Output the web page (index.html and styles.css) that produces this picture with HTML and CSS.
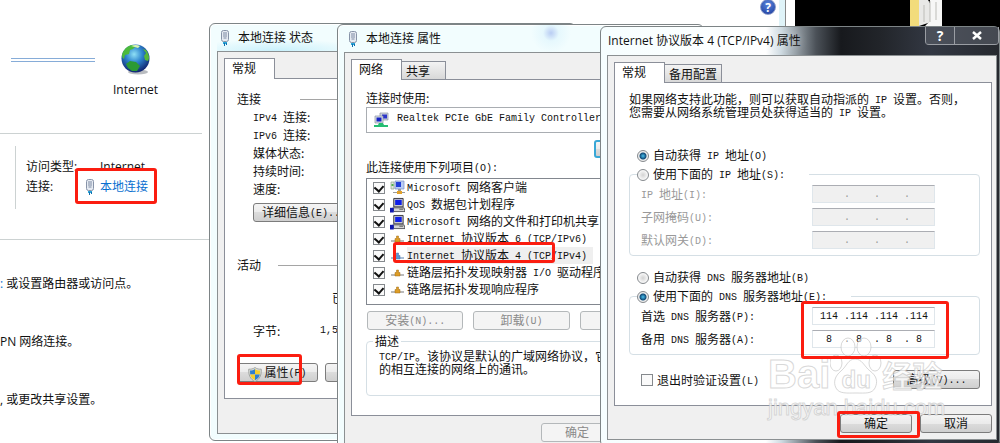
FILE: index.html
```
<!DOCTYPE html>
<html lang="zh-CN">
<head>
    <meta charset="UTF-8">
    <meta name="viewport" content="width=device-width, initial-scale=1.0">
    <title>网络和共享中心</title>
    <link rel="stylesheet" href="styles.css">
</head>
<body>
    <!-- 图标定义 -->
    <svg class="defs" width="0" height="0" aria-hidden="true">
        <defs>
            <radialGradient id="ocean" cx="45%" cy="35%" r="65%">
                <stop offset="0" stop-color="#8fe0f5"/>
                <stop offset="0.45" stop-color="#2f86cf"/>
                <stop offset="1" stop-color="#10246f"/>
            </radialGradient>
        </defs>
        <symbol id="plug" viewBox="0 0 10 16">
            <rect x="1.5" y="0.5" width="7" height="11" rx="2" fill="#e6ebf2" stroke="#8793a8"/>
            <path d="M4 2v5M6 2v5M3.5 8h3" stroke="#7c8aa3" fill="none"/>
            <path d="M3 12h4v2H3z" fill="#2aa5d8"/>
            <path d="M4.500 13v3M6.500 13v2" stroke="#0d6fae"/>
        </symbol>
        <symbol id="shield" viewBox="0 0 14 15">
            <path d="M7 0.500C9 2 11 2.200 13.300 2.200C13.500 8 12 12 7 14.600C2 12 0.500 8 0.700 2.200C3 2.200 5 2 7 .5z" fill="#d9dcd8" stroke="#8b8f8b" stroke-width=".7"/>
            <path d="M7 2v5.500H2.200L2 3.600C4 3.600 5.600 3 7 2z" fill="#2f7fd0"/>
            <path d="M7 2v5.500h4.800l.2-3.900C10 3.600 8.400 3 7 2z" fill="#f7cf2c"/>
            <path d="M7 7.500v5.800C4 11.800 2.600 10 2.200 7.500z" fill="#f7cf2c"/>
            <path d="M7 7.500v5.800C10 11.800 11.400 10 11.800 7.500z" fill="#2f7fd0"/>
        </symbol>
        <symbol id="adapter" viewBox="0 0 16 16">
            <path d="M7 1h8v7H7z" fill="#cfd4dc" stroke="#8a93a3" stroke-width=".7"/>
            <path d="M9 2.500h5v4H9z" fill="#2b35c9"/>
            <path d="M2 4h8v7H2z" fill="#d9dde3" stroke="#8a93a3" stroke-width=".7"/>
            <path d="M3.500 5.500h5v4h-5z" fill="#1522c4"/>
            <path d="M6 11h4l1 2h4v2H1v-2h4z" fill="#25bd72"/>
        </symbol>
        <symbol id="client" viewBox="0 0 15 15">
            <path d="M1 2h3v7H1z" fill="#dfe6dc" stroke="#8fa08c" stroke-width=".7"/>
            <path d="M1.500 4h2v2h-2z" fill="#52b24c"/>
            <path d="M5 1h9v8H5z" fill="#b9cdf5" stroke="#7a8cc0" stroke-width=".7"/>
            <path d="M6 2h5v5H6z" fill="#2340d8"/>
            <path d="M8 9h3v3H8zM3 12h12v1H3z" fill="#9a9a9a"/>
            <path d="M7 11h5v3H7z" fill="#e3a229"/>
        </symbol>
        <symbol id="service" viewBox="0 0 16 16">
            <path d="M4 1h10v9H4z" fill="#c9c9cf" stroke="#33333b"/>
            <path d="M5.500 2.500h7v5.500h-7z" fill="#0f1ee8"/>
            <path d="M3 11h12l1 4H4z" fill="#d5d5d5" stroke="#33333b" stroke-width=".8"/>
            <path d="M0 11h4v5H0z" fill="#1018b0"/>
            <path d="M10 12.500h4" stroke="#555"/>
        </symbol>
        <symbol id="protocol" viewBox="0 0 13 9">
            <path d="M0 7h13" stroke="#8c8c8c" stroke-width="1.200"/>
            <path d="M5.500 2h2v2.500H9V8H4V4.500h1.500z" fill="#dd9d27" stroke="#a06a10" stroke-width=".5"/>
        </symbol>
        <symbol id="protocol-on" viewBox="0 0 13 9">
            <path d="M0 7h13" stroke="#6f93bd" stroke-width="1.200"/>
            <path d="M5.500 2h2v2.500H9V8H4V4.500h1.500z" fill="#5f95cf" stroke="#3c6fa8" stroke-width=".5"/>
        </symbol>
    </svg>

    <main class="desktop">
        <svg class="folder" viewBox="0 0 32 26" aria-hidden="true">
            <path d="M0 0h9v26H0z" fill="#f2dc7c"/>
            <path d="M9 0h9l3 5v17l-12 4z" fill="#e9e9e7"/>
            <path d="M20 0h12v26H15l5-5z" fill="#f7f7f6"/>
            <path d="M14 5v17M20 1v21M26 2v18" stroke="#bdbdb8" fill="none"/>
        </svg>

        <!-- 网络和共享中心 -->
        <section class="explorer">
            <button class="help" aria-label="帮助">?</button>
            <div class="map">
                <span class="link-line"></span>
                <div class="node">
                    <svg width="30" height="31" viewBox="0 0 30 31">
                        <ellipse cx="17" cy="28" rx="10" ry="2.500" fill="#b9bcc0"/>
                        <circle cx="14.500" cy="14.500" r="14" fill="url(#ocean)"/>
                        <path d="M1 11C2 6 6 2 11 1L15 2 12 5 9 6 8 10 4 11 3 15C1.500 14 1 13 1 11z" fill="#4cba3c"/>
                        <path d="M5 20L9 17 15 18 19 22 16 27 11 27 7 24z" fill="#2c9a33"/>
                        <path d="M22 5L25 6C28 10 29 14 27 17L24 16 23 12 25 9z" fill="#57b83b"/>
                        <path d="M10 2Q15 0 19 2L17 4Q14 3 10 2z" fill="#d8f5b0"/>
                    </svg>
                    <span>Internet</span>
                </div>
            </div>
            <dl class="access">
                <dt>访问类型:</dt>
                <dd>Internet</dd>
                <dt>连接:</dt>
                <dd><a href="#status"><svg width="10" height="16"><use href="#plug"/></svg>本地连接</a></dd>
            </dl>
            <ul class="tasks">
                <li><a href="#setup">:</a> 或设置路由器或访问点。</li>
                <li>PN 网络连接。</li>
                <li>, 或更改共享设置。</li>
            </ul>
        </section>

        <!-- 本地连接 状态 -->
        <section class="window win-status" id="status">
            <header class="titlebar"><svg width="10" height="16"><use href="#plug"/></svg>本地连接 状态</header>
            <div class="client">
                <nav class="tabs"><button class="tab active">常规</button></nav>
                <div class="panel">
                    <h2 class="divider wide">连接</h2>
                    <ul class="props">
                        <li><span class="en">IPv4 </span>连接:</li>
                        <li><span class="en">IPv6 </span>连接:</li>
                        <li>媒体状态:</li>
                        <li>持续时间:</li>
                        <li>速度:</li>
                    </ul>
                    <button class="btn details">详细信息<span class="en">(E)...</span></button>
                    <h2 class="divider activity">活动</h2>
                    <p class="sent">已</p>
                    <p class="bytes"><span>字节:</span><span class="en">1,5</span></p>
                    <div class="actions">
                        <button class="btn"><svg width="14" height="15"><use href="#shield"/></svg>属性<span class="en">(P)</span></button>
                        <button class="btn"><svg width="14" height="15"><use href="#shield"/></svg>禁用</button>
                    </div>
                </div>
            </div>
        </section>

        <!-- 本地连接 属性 -->
        <section class="window win-props">
            <header class="titlebar"><svg width="10" height="16"><use href="#plug"/></svg>本地连接 属性</header>
            <div class="client">
                <nav class="tabs"><button class="tab active">网络</button><button class="tab">共享</button></nav>
                <div class="panel">
                    <label class="line" for="adapter-name">连接时使用:</label>
                    <div class="adapter">
                        <svg width="16" height="16"><use href="#adapter"/></svg>
                        <input class="en" id="adapter-name" type="text" value="Realtek PCIe GbE Family Controller" readonly>
                    </div>
                    <button class="btn configure">配置</button>
                    <p class="line">此连接使用下列项目<span class="en">(O):</span></p>
                    <ul class="items">
                        <li><label><input type="checkbox" checked><svg width="15" height="15"><use href="#client"/></svg><span><span class="en">Microsoft </span>网络客户端</span></label></li>
                        <li><label><input type="checkbox" checked><svg width="15" height="16"><use href="#service"/></svg><span><span class="en">QoS </span>数据包计划程序</span></label></li>
                        <li><label><input type="checkbox" checked><svg width="15" height="16"><use href="#service"/></svg><span><span class="en">Microsoft </span>网络的文件和打印机共享</span></label></li>
                        <li><label><input type="checkbox" checked><svg width="15" height="9"><use href="#protocol"/></svg><span><span class="en">Internet </span>协议版本<span class="en"> 6 (TCP/IPv6)</span></span></label></li>
                        <li class="selected"><label><input type="checkbox" checked><svg width="15" height="9"><use href="#protocol-on"/></svg><span><span class="en">Internet </span>协议版本<span class="en"> 4 (TCP/IPv4)</span></span></label></li>
                        <li><label><input type="checkbox" checked><svg width="15" height="9"><use href="#protocol"/></svg><span>链路层拓扑发现映射器<span class="en"> I/O </span>驱动程序</span></label></li>
                        <li><label><input type="checkbox" checked><svg width="15" height="9"><use href="#protocol"/></svg><span>链路层拓扑发现响应程序</span></label></li>
                    </ul>
                    <div class="actions">
                        <button class="btn" disabled>安装<span class="en">(N)...</span></button>
                        <button class="btn" disabled>卸载<span class="en">(U)</span></button>
                        <button class="btn" disabled></button>
                    </div>
                    <fieldset class="desc">
                        <legend>描述</legend>
                        <p><span class="en">TCP/IP</span>。该协议是默认的广域网络协议，它<br>的相互连接的网络上的通讯。</p>
                    </fieldset>
                </div>
                <div class="footer"><button class="btn" disabled>确定</button></div>
            </div>
        </section>

        <!-- Internet 协议版本 4 属性 -->
        <section class="window win-ipv4">
            <header class="titlebar">
                <span>Internet 协议版本 4 (TCP/IPv4) 属性</span>
                <div class="controls">
                    <button aria-label="帮助">?</button>
                    <button aria-label="关闭"><svg width="10" height="9" viewBox="0 0 10 9"><path d="M1 1l8 7M9 1L1 8" stroke="#fff" stroke-width="2.500"/></svg></button>
                </div>
            </header>
            <div class="client">
                <nav class="tabs"><button class="tab active">常规</button><button class="tab">备用配置</button></nav>
                <div class="panel">
                    <p class="intro">如果网络支持此功能，则可以获取自动指派的<span class="en"> IP </span>设置。否则，<br>您需要从网络系统管理员处获得适当的<span class="en"> IP </span>设置。</p>
                    <label class="choice"><input type="radio" name="ip" checked>自动获得<span class="en"> IP </span>地址<span class="en">(O)</span></label>
                    <fieldset class="group off">
                        <legend><label class="choice"><input type="radio" name="ip">使用下面的<span class="en"> IP </span>地址<span class="en">(S):</span></label></legend>
                        <div class="field"><label for="ip-addr"><span class="en">IP </span>地址<span class="en">(I):</span></label><input class="en" id="ip-addr" type="text" value="    .    .    ." disabled></div>
                        <div class="field"><label for="ip-mask">子网掩码<span class="en">(U):</span></label><input class="en" id="ip-mask" type="text" value="    .    .    ." disabled></div>
                        <div class="field"><label for="ip-gate">默认网关<span class="en">(D):</span></label><input class="en" id="ip-gate" type="text" value="    .    .    ." disabled></div>
                    </fieldset>
                    <label class="choice dns-auto"><input type="radio" name="dns">自动获得<span class="en"> DNS </span>服务器地址<span class="en">(B)</span></label>
                    <fieldset class="group">
                        <legend><label class="choice"><input type="radio" name="dns" checked>使用下面的<span class="en"> DNS </span>服务器地址<span class="en">(E):</span></label></legend>
                        <div class="field"><label for="dns-1">首选<span class="en"> DNS </span>服务器<span class="en">(P):</span></label><input class="en" id="dns-1" type="text" value="114 .114 .114 .114"></div>
                        <div class="field"><label for="dns-2">备用<span class="en"> DNS </span>服务器<span class="en">(A):</span></label><input class="en" id="dns-2" type="text" value=" 8  . 8  . 8  . 8"></div>
                    </fieldset>
                    <div class="last-row">
                        <label class="check"><input type="checkbox"><span>退出时验证设置<span class="en">(L)</span></span></label>
                        <button class="btn">高级<span class="en">(V)...</span></button>
                    </div>
                </div>
                <div class="footer"><button class="btn">确定</button><button class="btn">取消</button></div>
            </div>
        </section>

        <!-- 水印 -->
        <div class="watermark">
            <div class="brand">
                <span>Bai</span>
                <span class="paw">
                    <svg width="52" height="58" viewBox="0 0 52 58">
                        <ellipse cx="6" cy="26" rx="6" ry="8"/>
                        <ellipse cx="18" cy="10" rx="7" ry="9"/>
                        <ellipse cx="34" cy="10" rx="7" ry="9"/>
                        <ellipse cx="45" cy="26" rx="6" ry="8"/>
                        <path d="M25 22C32 22 34 29 40 34C47 39 48 45 45 51C42 57 35 56 26 56C17 56 9 57 6 51C3 45 5 39 11 34C17 29 18 22 25 22z"/>
                    </svg>
                    <span>du</span>
                </span>
                <span class="cn">经验</span>
            </div>
            <div class="site">jingyan.baidu.com</div>
        </div>

        <!-- 红框标注 -->
        <i class="mark mark-link"></i>
        <i class="mark mark-props"></i>
        <i class="mark mark-ipv4"></i>
        <i class="mark mark-dns"></i>
        <i class="mark mark-ok"></i>
    </main>
</body>
</html>
```
FILE: styles.css
```
* {
    box-sizing: border-box;
}
body {
    margin: 0;
    font-family: "Open Sans", "Noto Sans CJK SC", sans-serif;
    font-size: 12px;
    line-height: 18px;
    color: #111;
}
p, h2, ul, dl, dd, fieldset {
    margin: 0;
    padding: 0;
}
ul {
    list-style: none;
}
h2 {
    font-size: 12px;
    font-weight: normal;
}
button, input {
    font: inherit;
    color: inherit;
    margin: 0;
}
a {
    color: #0a6fd0;
    text-decoration: none;
}
svg {
    flex: none;
}
.defs {
    position: absolute;
}
.desktop {
    position: relative;
    min-height: 100vh;
    overflow: hidden;
    background: #000;
}
.folder {
    position: absolute;
    top: 0;
    left: 910px;
    width: 32px;
    height: 26px;
}

/* 背景窗口 */
.explorer {
    position: relative;
    width: 785px;
    min-height: 100vh;
    background: #fff;
    border-right: 6px solid #dff3f8;
    box-shadow: 1px 0 #888, 10px 0 #fff;
    white-space: nowrap;
}
.help {
    position: absolute;
    top: -1px;
    right: 3px;
    width: 16px;
    height: 16px;
    padding: 0;
    border: 1px solid #8b9ac8;
    border-radius: 50%;
    background: radial-gradient(circle at 50% 30%, #5a86dc, #1b3a9c);
    color: #fff;
    font-weight: bold;
    line-height: 13px;
}
.map {
    display: flex;
    align-items: flex-start;
    width: 202px;
    height: 134px;
    padding: 44px 0 0 11px;
    border-bottom: 1px solid #ccd2d2;
}
.link-line {
    width: 84px;
    height: 4px;
    margin-top: 14px;
    border: solid #86acd8;
    border-width: 1px 0;
}
.node {
    display: flex;
    flex-direction: column;
    align-items: center;
    gap: 6px;
    margin-left: 18px;
}
.access {
    display: grid;
    grid-template-columns: 74px auto;
    grid-auto-rows: 20px;
    width: 194px;
    margin: 12px 0 30px 15px;
    padding: 12px 0 11px 10px;
    border-left: 1px solid #ccd2d2;
}
.access dd svg {
    margin: 0 5px 0 -15px;
    vertical-align: -4px;
}
.tasks {
    padding: 35px 0 0;
    border-top: 1px solid #ccd2d2;
}
.tasks li {
    margin-bottom: 40px;
}

/* 窗口 */
.window {
    position: absolute;
    width: 367px;
    padding: 0 6px 6px 7px;
    border: 1px solid #7d8486;
    border-radius: 6px;
    background: #f2fdfe;
    box-shadow: inset 0 0 0 1px #fff;
    white-space: nowrap;
}
.win-status {
    top: 23px;
    left: 209px;
}
.win-props {
    top: 24px;
    left: 337px;
    padding-left: 6px;
}
.win-ipv4 {
    top: 26px;
    left: 600px;
    right: 0;
    width: auto;
    padding-right: 2px;
    padding-left: 6px;
    background: linear-gradient(90deg, #f6feff 0, #fff 165px, #cfdbe2 180px, #4b5158 215px, #17191d 240px, #22252a 280px, #333843 330px, #26292f 100%);
    box-shadow: none;
}
.titlebar {
    display: flex;
    align-items: center;
    gap: 8px;
    height: 27px;
    padding-left: 3px;
}
.win-status .titlebar {
    background: radial-gradient(ellipse 90px 12px at 60px 100%, #c8f0fb, transparent);
}
.win-props .titlebar {
    padding-left: 4px;
    background: radial-gradient(circle at 207px 8px, #b9cdf3 0, #e6f8fd 8px, transparent 20px);
}
.win-ipv4 .titlebar {
    height: 28px;
    padding-left: 1px;
    text-shadow: 0 0 8px rgba(255, 255, 255, 0.6);
}
.controls {
    display: flex;
    align-self: flex-start;
    margin-left: auto;
    margin-right: -2px;
    border: 1px solid #9a9da3;
    border-top: 0;
    border-radius: 0 0 4px 4px;
}
.controls button {
    display: flex;
    align-items: center;
    justify-content: center;
    width: 28px;
    height: 17px;
    padding: 0;
    border: 0;
    background: rgba(90, 95, 105, 0.6);
    color: #fff;
    font-size: 14px;
    font-weight: bold;
}
.controls button + button {
    width: 44px;
    border-left: 1px solid #9a9da3;
}
.client {
    padding: 6px 5px 6px 6px;
    border: 1px solid #8b9092;
    background: #f0f0f0;
    font-family: "Noto Sans CJK SC", sans-serif;
}
.win-status .client {
    padding-bottom: 34px;
}
.win-ipv4 .client {
    padding-right: 4px;
}
.en {
    font-family: "Liberation Mono", monospace;
    font-size: 10px;
    line-height: 10px;
    vertical-align: 1px;
    white-space: pre;
}
.tabs {
    display: flex;
    align-items: flex-end;
    height: 20px;
}
.tab {
    height: 18px;
    padding: 0 4px;
    border: 1px solid #8b8f99;
    border-left: 0;
    border-bottom: 0;
    background: linear-gradient(#f3f3f3, #d8d8d8);
    line-height: 16px;
}
.tab.active {
    position: relative;
    width: 51px;
    height: 21px;
    margin-bottom: -1px;
    padding: 0 0 2px 7px;
    border-left: 1px solid #8b8f99;
    background: #fff;
    text-align: left;
}
.win-props .tab {
    width: 44px;
    text-align: left;
}
.win-props .tab.active {
    width: 51px;
}
.panel {
    border: 1px solid #8b8f99;
    background: #fff;
}
.btn {
    display: block;
    height: 19px;
    padding: 0 8px 2px;
    border: 1px solid #7c7c7c;
    border-radius: 3px;
    background: linear-gradient(#f4f4f4 0, #ebebeb 50%, #dcdcdc 50%, #cfcfcf 100%);
    line-height: 15px;
    text-align: center;
}
.btn:disabled {
    border-color: #b4b8ba;
    background: #f4f4f4;
    color: #8a8a8a;
}
.actions {
    display: flex;
}
.divider {
    display: flex;
    align-items: center;
    gap: 17px;
}
.divider::after {
    content: "";
    flex: 1;
    border-top: 1px solid #a5a5a5;
}
.divider.wide {
    gap: 39px;
}

/* 状态窗口 */
.win-status .panel {
    padding: 11px 12px 16px;
}
.props {
    padding-left: 16px;
}
.details {
    margin: 5px 0 34px 16px;
}
.sent {
    margin: 15px 0;
    padding-left: 95px;
}
.bytes {
    display: flex;
    align-items: center;
    padding-left: 16px;
}
.bytes span:first-child {
    width: 67px;
}
.win-status .actions {
    gap: 7px;
    margin-top: 23px;
}
.win-status .actions .btn {
    width: 81px;
}
.actions svg {
    margin: -2px 2px -2px 0;
    vertical-align: -3px;
}

/* 属性窗口 */
.win-props .panel {
    padding: 9px 14px 19px;
}
.line {
    display: block;
}
.adapter {
    display: flex;
    align-items: center;
    gap: 8px;
    height: 26px;
    padding-left: 6px;
    border: 1px solid #a9adb2;
}
.adapter input {
    flex: 1;
    padding: 0 0 2px;
    border: 0;
    line-height: 16px;
}
.configure {
    width: 82px;
    height: 18px;
    margin: 7px 0 0 auto;
    border: 2px solid #39a7d6;
}
.items {
    margin: 2px 0 6px;
    padding: 0 0 6px 6px;
    border: 1px solid #82878f;
}
.items label {
    display: flex;
    align-items: center;
    gap: 2px;
    height: 17px;
}
.items svg {
    margin-left: 3px;
}
.items label > span {
    padding-bottom: 2px;
    line-height: 15px;
}
.selected label > span {
    padding-right: 6px;
    background: #efefef;
}
input[type="checkbox"] {
    appearance: none;
    display: flex;
    flex: none;
    width: 12px;
    height: 12px;
    border: 1px solid #85898d;
    background: #fafafa;
}
input[type="checkbox"]:checked::before {
    content: "";
    width: 8px;
    height: 5px;
    margin: 1px;
    border: solid #111;
    border-width: 0 0 2px 2px;
    transform: rotate(-48deg);
}
.win-props .actions {
    gap: 10px;
    padding-left: 1px;
}
.win-props .actions .btn {
    width: 97px;
}
.desc,
.group {
    min-width: 0;
    border: 1px solid #d5dfe5;
    border-radius: 4px;
}
.desc {
    margin-top: 2px;
    padding: 0 12px 20px;
}
.desc legend {
    margin-left: -6px;
    padding: 0 2px;
}
.desc p,
.intro {
    line-height: 12px;
}
.footer {
    display: flex;
    justify-content: flex-end;
    gap: 8px;
    padding-top: 8px;
}
.footer .btn {
    width: 72px;
}
.win-props .footer {
    padding: 7px 78px 0 0;
}

/* IPv4 窗口 */
.win-ipv4 .panel {
    padding: 10px 11px 16px 14px;
}
.intro {
    margin-bottom: 27px;
}
.choice {
    display: block;
    height: 18px;
    padding-left: 8px;
}
legend .choice {
    padding: 0 24px 0 0;
}
input[type="radio"] {
    appearance: none;
    width: 12px;
    height: 12px;
    margin-right: 4px;
    border: 1px solid #85898d;
    border-radius: 50%;
    background: radial-gradient(#d3d3d3, #fafafa 70%);
    vertical-align: -2px;
}
input[type="radio"]:checked {
    background: radial-gradient(circle, #49c0ee 0, #124c79 3px, #eee 4px);
}
.group {
    margin-top: 1px;
    padding: 0 7px 6px;
}
.group legend {
    margin-bottom: 2px;
    padding: 0;
}
.field {
    display: flex;
    align-items: center;
    height: 18px;
    margin: 0 0 5px 4px;
}
.field:last-child {
    margin-bottom: 0;
}
.field label {
    width: 171px;
}
.field input {
    width: 123px;
    height: 18px;
    padding: 0 0 0 7px;
    border: 1px solid #dfe6eb;
    border-top-color: #abadb3;
}
.off .field {
    color: #999;
}
.off input:disabled {
    background: #f0f0f0;
}
.dns-auto {
    margin-top: 12px;
}
.last-row {
    display: flex;
    align-items: center;
    justify-content: space-between;
    margin-top: 15px;
}
.check {
    display: flex;
    align-items: center;
    gap: 4px;
    padding-left: 12px;
}
.last-row .btn {
    width: 87px;
}

/* 水印 */
.watermark {
    position: absolute;
    top: 335px;
    left: 768px;
    color: rgba(255, 255, 255, 0.75);
    -webkit-text-stroke: 1px rgba(190, 190, 190, 0.6);
    pointer-events: none;
}
.brand {
    display: flex;
    align-items: flex-end;
    height: 60px;
    font: bold 40px/42px "Liberation Sans", sans-serif;
}
.paw {
    display: grid;
    place-items: end center;
    font-size: 24px;
    line-height: 30px;
}
.paw > * {
    grid-area: 1 / 1;
}
.paw svg {
    fill: rgba(255, 255, 255, 0.55);
    stroke: rgba(190, 190, 190, 0.6);
}
.cn {
    font-family: "Noto Sans CJK SC", sans-serif;
    font-size: 30px;
}
.site {
    font: 22px/26px "Liberation Sans", sans-serif;
}

/* 标注 */
.mark {
    position: absolute;
    border: 3px solid #fb1d10;
    border-radius: 3px;
}
.mark-link {
    top: 168px;
    left: 75px;
    width: 82px;
    height: 36px;
}
.mark-props {
    top: 354px;
    left: 237px;
    width: 65px;
    height: 31px;
}
.mark-ipv4 {
    top: 242px;
    left: 393px;
    width: 162px;
    height: 21px;
}
.mark-dns {
    top: 301px;
    left: 801px;
    width: 148px;
    height: 58px;
}
.mark-ok {
    top: 411px;
    left: 837px;
    width: 83px;
    height: 27px;
}
```
